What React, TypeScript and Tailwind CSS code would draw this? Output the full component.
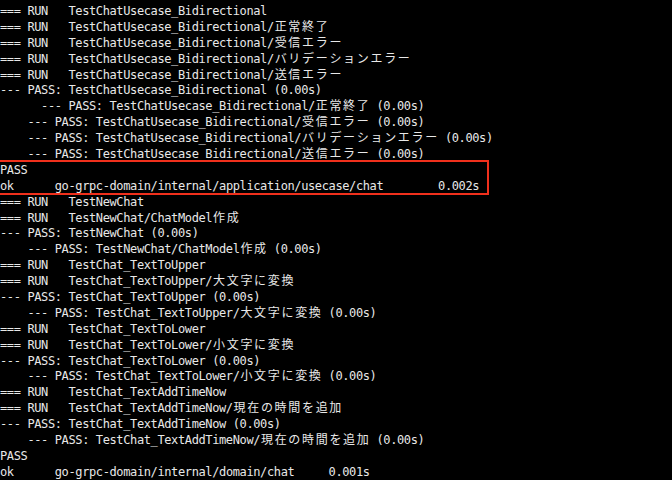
import React from 'react';

const lines: string[] = [
  '=== RUN   TestChatUsecase_Bidirectional',
  '=== RUN   TestChatUsecase_Bidirectional/正常終了',
  '=== RUN   TestChatUsecase_Bidirectional/受信エラー',
  '=== RUN   TestChatUsecase_Bidirectional/バリデーションエラー',
  '=== RUN   TestChatUsecase_Bidirectional/送信エラー',
  '--- PASS: TestChatUsecase_Bidirectional (0.00s)',
  '      --- PASS: TestChatUsecase_Bidirectional/正常終了 (0.00s)',
  '    --- PASS: TestChatUsecase_Bidirectional/受信エラー (0.00s)',
  '    --- PASS: TestChatUsecase_Bidirectional/バリデーションエラー (0.00s)',
  '    --- PASS: TestChatUsecase_Bidirectional/送信エラー (0.00s)',
];

const boxed: string[] = ['PASS', 'ok  \tgo-grpc-domain/internal/application/usecase/chat\t0.002s'];

const rest: string[] = [
  '=== RUN   TestNewChat',
  '=== RUN   TestNewChat/ChatModel作成',
  '--- PASS: TestNewChat (0.00s)',
  '    --- PASS: TestNewChat/ChatModel作成 (0.00s)',
  '=== RUN   TestChat_TextToUpper',
  '=== RUN   TestChat_TextToUpper/大文字に変換',
  '--- PASS: TestChat_TextToUpper (0.00s)',
  '    --- PASS: TestChat_TextToUpper/大文字に変換 (0.00s)',
  '=== RUN   TestChat_TextToLower',
  '=== RUN   TestChat_TextToLower/小文字に変換',
  '--- PASS: TestChat_TextToLower (0.00s)',
  '    --- PASS: TestChat_TextToLower/小文字に変換 (0.00s)',
  '=== RUN   TestChat_TextAddTimeNow',
  '=== RUN   TestChat_TextAddTimeNow/現在の時間を追加',
  '--- PASS: TestChat_TextAddTimeNow (0.00s)',
  '    --- PASS: TestChat_TextAddTimeNow/現在の時間を追加 (0.00s)',
  'PASS',
  'ok  \tgo-grpc-domain/internal/domain/chat\t0.001s',
];

// terminal draws CJK glyphs in double-width cells
const isWide = (ch: string) => ch.charCodeAt(0) > 0x2e80;

const Line = ({ text }: { text: string }) => {
  const parts: React.ReactNode[] = [];
  let buf = '';
  Array.from(text).forEach((ch, i) => {
    if (isWide(ch)) {
      if (buf) parts.push(buf);
      buf = '';
      parts.push(
        <span key={i} className="inline-block w-[13.7px] text-center tracking-normal">
          {ch}
        </span>
      );
    } else {
      buf += ch;
    }
  });
  if (buf) parts.push(buf);
  return <div className="h-[15.9px] whitespace-pre">{parts}</div>;
};

export default function App() {
  return (
    <div
      className="w-[672px] h-[480px] overflow-hidden bg-black pt-[4px] text-[12px] tracking-[-0.38px] leading-[15.9px] text-[#e8e8e8]"
      style={{ fontFamily: '"DejaVu Sans Mono", "Noto Sans CJK JP", monospace', tabSize: 8 }}
    >
      {lines.map((l, i) => (
        <Line key={i} text={l} />
      ))}
      <div className="relative">
        {boxed.map((l, i) => (
          <Line key={i} text={l} />
        ))}
        <div className="absolute -top-[3px] bottom-0 -left-[4px] w-[493px] border-2 border-[#f0301c]" />
      </div>
      {rest.map((l, i) => (
        <Line key={i} text={l} />
      ))}
    </div>
  );
}
